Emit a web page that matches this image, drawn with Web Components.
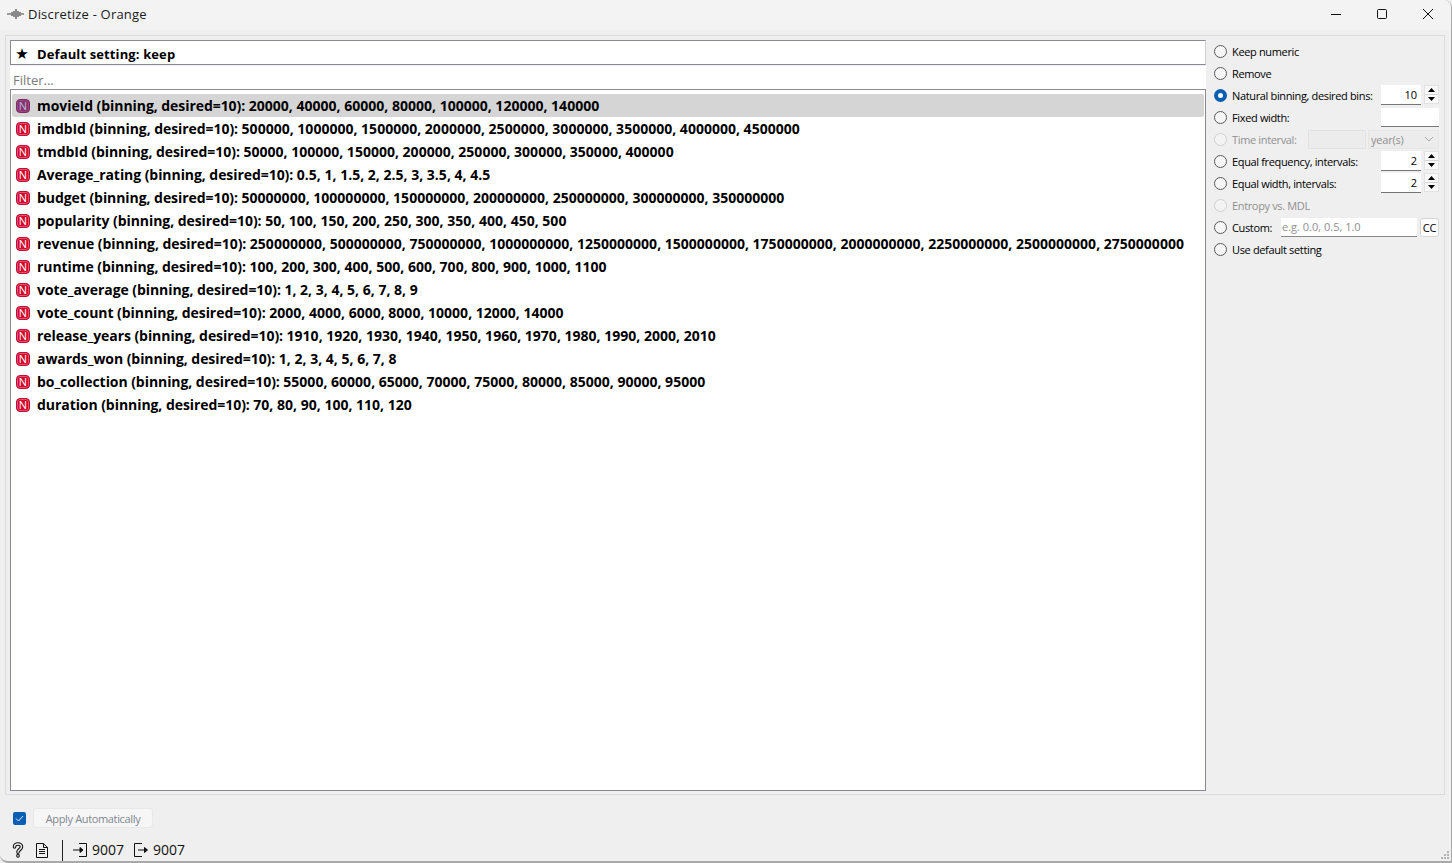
<!DOCTYPE html>
<html>
<head>
<meta charset="utf-8">
<title>Discretize - Orange</title>
<style>
  html, body { margin: 0; height: 100%; overflow: hidden; background: #efefef; }
  body { font-family: "Open Sans", "Noto Sans", sans-serif; color: #000; }
</style>
</head>
<body>
<orange-window>
  <title-bar slot="title" text="Discretize - Orange"></title-bar>
  <var-list slot="list">
    <var-row selected name="movieId" points="20000, 40000, 60000, 80000, 100000, 120000, 140000"></var-row>
    <var-row name="imdbId" points="500000, 1000000, 1500000, 2000000, 2500000, 3000000, 3500000, 4000000, 4500000"></var-row>
    <var-row name="tmdbId" points="50000, 100000, 150000, 200000, 250000, 300000, 350000, 400000"></var-row>
    <var-row name="Average_rating" points="0.5, 1, 1.5, 2, 2.5, 3, 3.5, 4, 4.5"></var-row>
    <var-row name="budget" points="50000000, 100000000, 150000000, 200000000, 250000000, 300000000, 350000000"></var-row>
    <var-row name="popularity" points="50, 100, 150, 200, 250, 300, 350, 400, 450, 500"></var-row>
    <var-row name="revenue" points="250000000, 500000000, 750000000, 1000000000, 1250000000, 1500000000, 1750000000, 2000000000, 2250000000, 2500000000, 2750000000"></var-row>
    <var-row name="runtime" points="100, 200, 300, 400, 500, 600, 700, 800, 900, 1000, 1100"></var-row>
    <var-row name="vote_average" points="1, 2, 3, 4, 5, 6, 7, 8, 9"></var-row>
    <var-row name="vote_count" points="2000, 4000, 6000, 8000, 10000, 12000, 14000"></var-row>
    <var-row name="release_years" points="1910, 1920, 1930, 1940, 1950, 1960, 1970, 1980, 1990, 2000, 2010"></var-row>
    <var-row name="awards_won" points="1, 2, 3, 4, 5, 6, 7, 8"></var-row>
    <var-row name="bo_collection" points="55000, 60000, 65000, 70000, 75000, 80000, 85000, 90000, 95000"></var-row>
    <var-row name="duration" points="70, 80, 90, 100, 110, 120"></var-row>
  </var-list>
  <method-panel slot="side">
    <method-option label="Keep numeric"></method-option>
    <method-option label="Remove"></method-option>
    <method-option label="Natural binning, desired bins:" checked><spin-box value="10"></spin-box></method-option>
    <method-option label="Fixed width:"><plain-field></plain-field></method-option>
    <method-option label="Time interval:" disabled><time-field></time-field></method-option>
    <method-option label="Equal frequency, intervals:"><spin-box value="2"></spin-box></method-option>
    <method-option label="Equal width, intervals:"><spin-box value="2"></spin-box></method-option>
    <method-option label="Entropy vs. MDL" disabled></method-option>
    <method-option label="Custom:"><custom-field></custom-field></method-option>
    <method-option label="Use default setting"></method-option>
  </method-panel>
  <apply-bar slot="apply"></apply-bar>
  <status-bar slot="status"></status-bar>
</orange-window>

<script>
  // small helper, every element just sets its shadow html once
  class Base extends HTMLElement {
    constructor() {
      super();
      this.attachShadow({ mode: 'open' });
    }
    connectedCallback() {
      this.shadowRoot.innerHTML = this.render();
    }
    attr(name, dflt = '') {
      return this.hasAttribute(name) ? this.getAttribute(name) : dflt;
    }
  }

  class OrangeWindow extends Base {
    render() {
      return `
        <style>
          :host { display: flex; flex-direction: column; height: 863px; width: 1452px; box-sizing: border-box;
                  background: #efefef; border-right: 1px solid #a9a9a9; border-bottom: 2px solid #a9a9a9;
                  border-top-right-radius: 8px; border-bottom-left-radius: 8px; overflow: hidden; position: relative; }
          .main { display: flex; margin: 5px 6px 0 5px; height: 760px; box-sizing: border-box; flex: none;
                  border: 1px solid #dcdcdc; padding: 4px 0 3px 4px; gap: 7px; }
          .left { width: 1196px; flex: none; display: flex; flex-direction: column; }
          .grip { position: absolute; right: 1px; bottom: 1px; width: 10px; height: 10px; }
        </style>
        <slot name="title"></slot>
        <div class="main">
          <div class="left"><slot name="list"></slot></div>
          <slot name="side"></slot>
        </div>
        <slot name="apply"></slot>
        <slot name="status"></slot>
        <svg class="grip" viewBox="0 0 10 10" fill="#b4b4b4">
          <rect x="7" y="1" width="2" height="2"/><rect x="4" y="4" width="2" height="2"/><rect x="7" y="4" width="2" height="2"/>
          <rect x="1" y="7" width="2" height="2"/><rect x="4" y="7" width="2" height="2"/><rect x="7" y="7" width="2" height="2"/>
        </svg>`;
    }
  }

  class TitleBar extends Base {
    render() {
      return `
        <style>
          :host { display: flex; align-items: center; height: 30px; flex: none; background: #f3f3f3;
                  font-size: 13px; letter-spacing: .2px; color: #1a1a1a; padding-left: 7px; }
          .logo { width: 17px; height: 12px; margin-right: 4px; }
          .text { flex: 1; margin-top: -2px; }
          .btns { display: flex; }
          .btn { width: 46px; height: 30px; display: flex; align-items: center; justify-content: center; margin-top: -2px; }
        </style>
        <svg class="logo" style="margin-top:-2px" viewBox="0 0 17 12" fill="none" stroke="#444" stroke-width="1.2">
          <path d="M0 6h4M5 4v4M7 3v6M9 1v10M11 3v6M13 4v4M14 6h3"/>
        </svg>
        <span class="text">${this.attr('text')}</span>
        <div class="btns">
          <div class="btn"><svg width="12" height="12" viewBox="0 0 12 12" stroke="#111"><path d="M1 6.5h10"/></svg></div>
          <div class="btn"><svg width="12" height="12" viewBox="0 0 12 12" fill="none" stroke="#111"><rect x="1.5" y="1.5" width="9" height="9" rx="1"/></svg></div>
          <div class="btn"><svg width="12" height="12" viewBox="0 0 12 12" stroke="#111" fill="none"><path d="M1 1l10 10M11 1L1 11"/></svg></div>
        </div>`;
    }
  }

  class VarList extends Base {
    render() {
      return `
        <style>
          :host { display: flex; flex-direction: column; flex: 1; min-height: 0; }
          .default { height: 25px; box-sizing: border-box; background: #fff; border: 1px solid #8a8a96; border-right-color: #d0d0d0;
                     display: flex; align-items: center; padding: 2px 0 0 3px; font-weight: 700; font-size: 13px; letter-spacing: .12px; }
          .star { width: 16px; margin-right: 7px; font-size: 15px; text-align: center; font-family: "DejaVu Sans", sans-serif; }
          .filter { height: 24px; box-sizing: border-box; background: #fff; padding: 5px 0 0 3px; font-size: 13px; color: #7b7b7b;
                    border-bottom: 1px solid #8a8a96; line-height: 18px; margin-top: 1px; }
          .rows { flex: 1; box-sizing: border-box; background: #fff; border: 1px solid #8a8a96; border-top: 0; padding: 4px 1px 0; }
        </style>
        <div class="default"><span class="star">★</span>Default setting: keep</div>
        <div class="filter">Filter...</div>
        <div class="rows"><slot></slot></div>`;
    }
  }

  class VarRow extends Base {
    render() {
      const sel = this.hasAttribute('selected');
      return `
        <style>
          :host { display: flex; align-items: center; height: 23px; font-weight: 700; font-size: 14px; white-space: nowrap;
                  padding-left: 4px; background: ${sel ? '#d5d5d5' : 'transparent'}; border-radius: 2px; }
          .n { width: 14px; height: 14px; box-sizing: border-box; border-radius: 4px; margin-right: 7px; flex: none; font-weight: 400;
               color: ${sel ? '#b4c0dc' : '#fff'}; background: ${sel ? '#8a2e6e' : '#d6052c'};
               border: 1px solid ${sel ? '#7f2a66' : '#c40a30'}; box-shadow: inset 0 0 0 1px ${sel ? '#9a4a80' : '#e0546e'};
               font-size: 11px; line-height: 12px; text-align: center; letter-spacing: 0; }
          .name { letter-spacing: -.06px; }
          .pts { letter-spacing: .01px; }
        </style>
        <span class="n">N</span><span class="name">${this.attr('name')} (binning, desired=10):&nbsp;</span><span class="pts">${this.attr('points')}</span>`;
    }
  }

  class MethodPanel extends Base {
    render() {
      return `
        <style>
          :host { display: flex; flex-direction: column; flex: 1; min-width: 0; padding: 0 5px 0 1px; }
        </style>
        <slot></slot>`;
    }
  }

  class MethodOption extends Base {
    render() {
      const on = this.hasAttribute('checked');
      const off = this.hasAttribute('disabled');
      const ring = off ? '#cfcfcf' : on ? '#0a5fb4' : '#5a5a5a';
      return `
        <style>
          :host { display: flex; align-items: center; height: 22px; font-size: 11px; letter-spacing: -.35px; color: ${off ? '#8f8f8f' : '#000'}; white-space: nowrap; }
          .radio { width: 13px; height: 13px; border-radius: 50%; box-sizing: border-box; flex: none; margin-right: 5px;
                   border: ${on ? '4px solid ' + ring : '1px solid ' + ring}; background: ${on ? '#fff' : off ? '#f3f3f3' : '#f6f6f6'}; }
          .label { flex: 1; }
          .extra { display: flex; letter-spacing: 0; }
        </style>
        <span class="radio"></span><span class="label">${this.attr('label')}</span>
        <span class="extra"><slot></slot></span>`;
    }
  }

  class SpinBox extends Base {
    render() {
      return `
        <style>
          :host { display: flex; width: 58px; height: 20px; font-size: 11px; }
          .val { flex: 1; background: #fff; border-bottom: 1px solid #767676; text-align: right; padding-right: 4px; line-height: 20px; }
          .arrows { width: 15px; height: 19px; margin-left: 3px; box-sizing: border-box; display: flex; flex-direction: column; gap: 1px;
                    background: #d4d4d4; border: 1px solid #e2e2e2; padding: 0; }
          .arrows svg { flex: 1; min-height: 0; display: block; background: #f8f8f8; width: 13px; }
        </style>
        <span class="val">${this.attr('value')}</span>
        <span class="arrows">
          <svg viewBox="0 0 13 8"><path d="M6.5 2l3.5 4H3z"/></svg>
          <svg viewBox="0 0 13 8"><path d="M6.5 6l3.5-4H3z"/></svg>
        </span>`;
    }
  }

  class PlainField extends Base {
    render() {
      return `
        <style>:host { display: block; width: 58px; height: 19px; box-sizing: border-box; background: #fff; border-bottom: 1px solid #767676; }</style>`;
    }
  }

  class TimeField extends Base {
    render() {
      return `
        <style>
          :host { display: flex; gap: 2px; height: 19px; font-size: 11px; color: #8f8f8f; }
          .box { width: 58px; box-sizing: border-box; background: #ececec; border: 1px solid #e2e2e2; }
          .sel { width: 71px; box-sizing: border-box; background: #ececec; border: 1px solid #e6e6e6; display: flex; align-items: center;
                 justify-content: space-between; padding: 0 4px 0 2px; letter-spacing: -.2px; }
        </style>
        <span class="box"></span>
        <span class="sel">year(s)<svg width="10" height="6" viewBox="0 0 10 6" fill="none" stroke="#a6a6a6"><path d="M1 1l4 4 4-4"/></svg></span>`;
    }
  }

  class CustomField extends Base {
    render() {
      return `
        <style>
          :host { display: flex; gap: 3px; height: 19px; font-size: 11px; }
          .input { width: 136px; box-sizing: border-box; background: #fff; border-bottom: 1px solid #8a8a8a; color: #8f8f8f; padding-left: 1px; line-height: 18px; }
          .cc { width: 19px; box-sizing: border-box; background: #fdfdfd; border: 1px solid #d6d6d6; border-radius: 3px; text-align: center; line-height: 17px; letter-spacing: -.3px; }
        </style>
        <span class="input">e.g. 0.0, 0.5, 1.0</span><span class="cc">CC</span>`;
    }
  }

  class ApplyBar extends Base {
    render() {
      return `
        <style>
          :host { display: flex; align-items: center; height: 22px; padding-left: 13px; margin-top: 12px; flex: none; font-size: 11px; }
          .check { width: 13px; height: 13px; border-radius: 2px; background: #0a5fb4; display: flex; align-items: center; justify-content: center; margin-right: 7px; }
          .btn { width: 120px; height: 20px; box-sizing: border-box; background: #f6f6f6; border: 1px solid #e8e8e8; border-radius: 3px;
                 color: #7f8791; text-align: center; line-height: 20px; letter-spacing: -.35px; }
        </style>
        <span class="check"><svg width="9" height="7" viewBox="0 0 9 7" fill="none" stroke="#dce8f5"><path d="M1 3.5l2.5 2.5L8 1"/></svg></span>
        <span class="btn">Apply Automatically</span>`;
    }
  }

  class StatusBar extends Base {
    render() {
      return `
        <style>
          :host { display: flex; align-items: center; height: 22px; padding: 0 0 0 12px; margin-top: 10px; flex: none; font-size: 14px; color: #111; }
          svg { display: block; flex: none; }
          .sep { width: 1px; height: 21px; background: #222; margin: 0 10px 0 14px; }
          .num { margin: -1px 10px 0 5px; }
        </style>
        <svg width="12" height="16" viewBox="0 0 12 16" fill="none" stroke-linecap="round">
          <path d="M2.5 5C2.5 1 9.5 1 9.5 4.8c0 2.6-3.5 2.8-3.5 5.4M6 13.5v.5" stroke="#111" stroke-width="3.6"/>
          <path d="M2.5 5C2.5 1 9.5 1 9.5 4.8c0 2.6-3.5 2.8-3.5 5.4M6 13.5v.5" stroke="#efefef" stroke-width="1.4"/>
        </svg>
        <svg style="margin-left:12px" width="12" height="15" viewBox="0 0 12 15" fill="none" stroke="#111"><path d="M.5.5h7l4 4v10H.5zM7.5.5v4h4M3 6.5h6M3 8.5h6M3 10.5h6"/></svg>
        <span class="sep"></span>
        <svg width="14" height="14" viewBox="0 0 14 14" fill="none" stroke="#111"><path d="M6 .5h7.5v13H6M0 7h7"/><path d="M7 4.5L10 7 7 9.5z" fill="#111"/></svg>
        <span class="num">9007</span>
        <svg width="14" height="14" viewBox="0 0 14 14" fill="none" stroke="#111"><path d="M8 .5H.5v13H8M4 7h7"/><path d="M10.5 4.5L13.5 7l-3 2.5z" fill="#111"/></svg>
        <span class="num">9007</span>`;
    }
  }

  customElements.define('orange-window', OrangeWindow);
  customElements.define('title-bar', TitleBar);
  customElements.define('var-list', VarList);
  customElements.define('var-row', VarRow);
  customElements.define('method-panel', MethodPanel);
  customElements.define('method-option', MethodOption);
  customElements.define('spin-box', SpinBox);
  customElements.define('plain-field', PlainField);
  customElements.define('time-field', TimeField);
  customElements.define('custom-field', CustomField);
  customElements.define('apply-bar', ApplyBar);
  customElements.define('status-bar', StatusBar);
</script>
</body>
</html>
